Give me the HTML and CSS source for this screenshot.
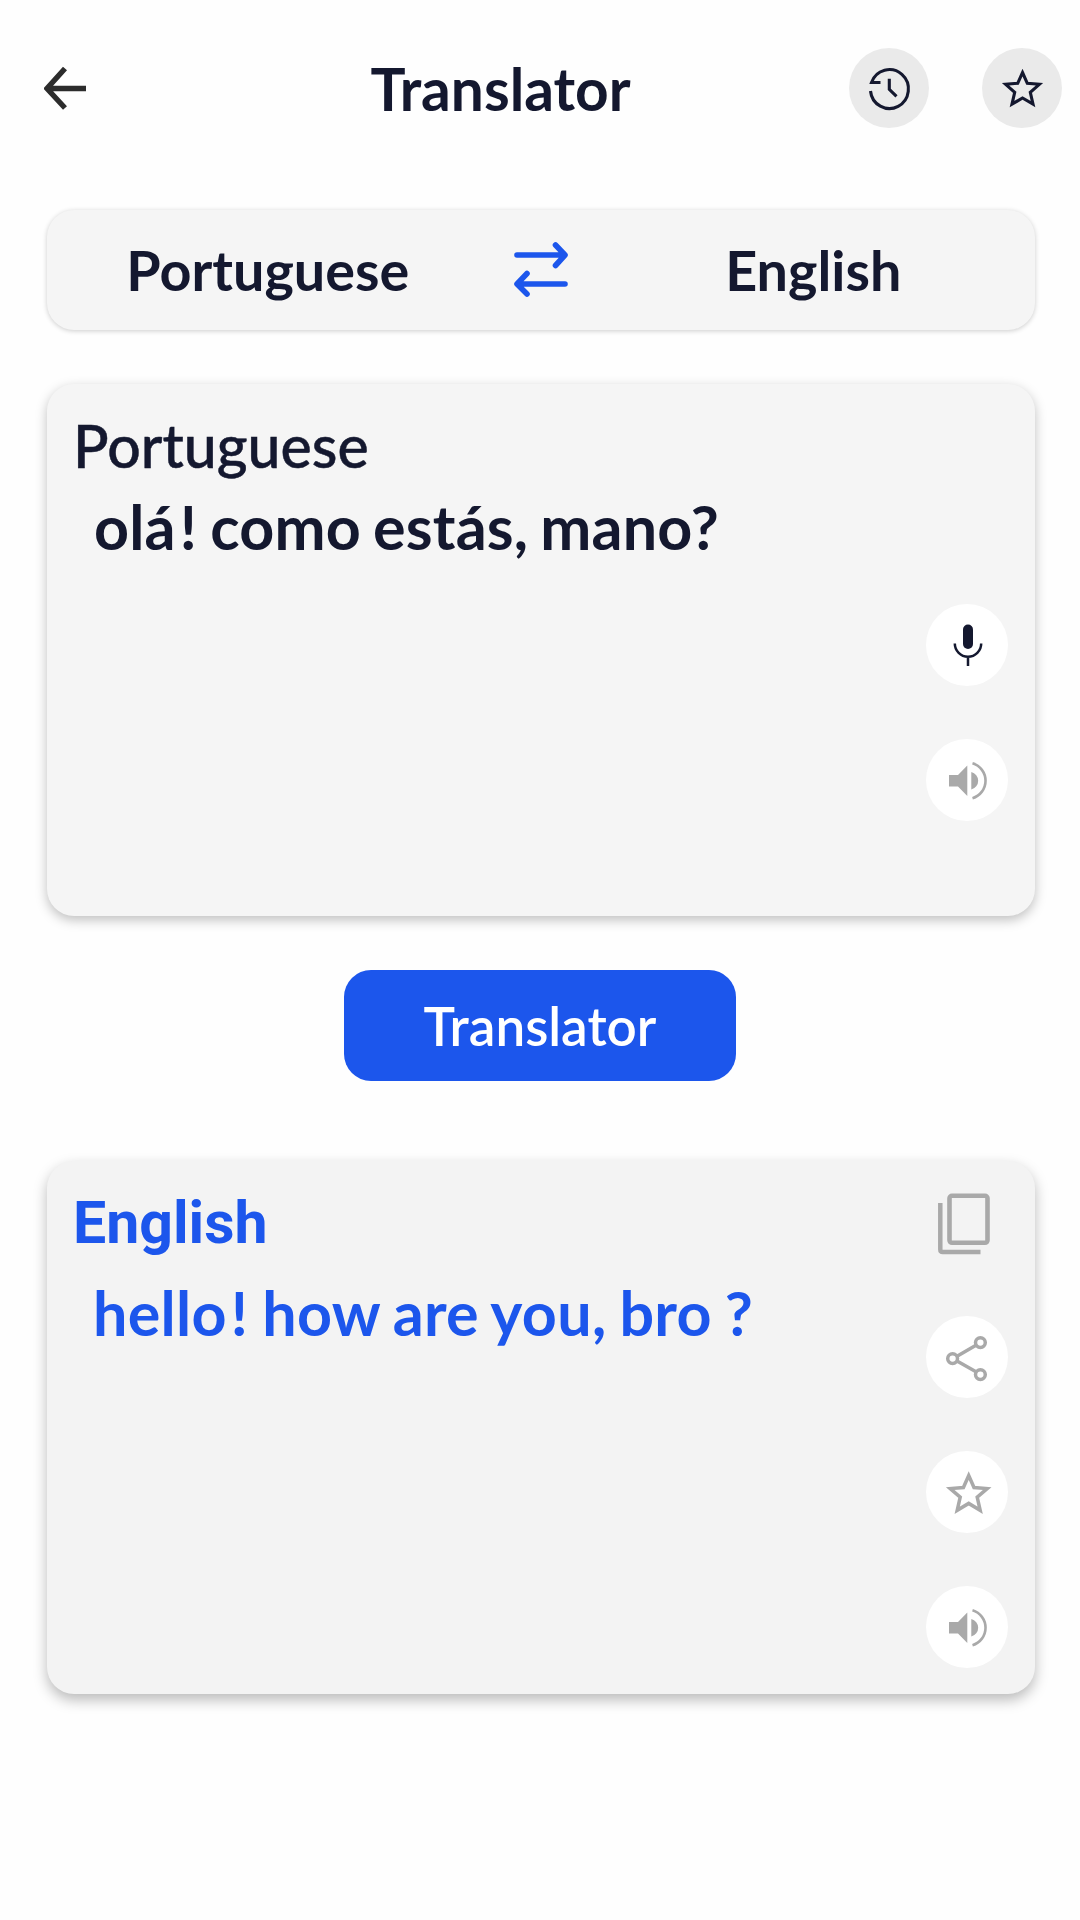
FILE: index.html
```html
<!DOCTYPE html>
<html lang="en">
<head>
  <meta charset="UTF-8" />
  <meta name="viewport" content="width=device-width, initial-scale=1.0"/>
  <title>Translator</title>
  <link rel="stylesheet" href="styles.css">
</head>
<body>
  <div class="header">
    <button class="back-button" aria-label="Back">
      <svg width="42" height="44" viewBox="0 0 42 44"><path d="M42 22.500H6M21 2.500L3 22.500L21 42" fill="none" stroke="#2c2c2c" stroke-width="5.400"/></svg>
    </button>
    <h1 class="title">Translator</h1>
    <div class="header-actions">
      <button class="round-button gray" aria-label="History">
        <svg viewBox="0 0 80 80"><path d="M31.500 34.500H22.500A19 19.500 0 1 1 21.500 43M40.300 30.800V41.300L47.500 48.300" fill="none" stroke="#14182f" stroke-width="3.100"/></svg>
      </button>
      <button class="round-button gray" aria-label="Favorites">
        <svg viewBox="0 0 80 80"><path d="M40.500 24.500L45.300 35.300L57.400 36.300L48.300 44.400L51 56.200L40.500 50L30 56.200L32.700 44.400L23.600 36.300L35.700 35.300Z" fill="none" stroke="#14182f" stroke-width="3.100"/></svg>
      </button>
    </div>
  </div>

  <div class="languages">
    <span class="language from">Portuguese</span>
    <button class="swap-button" aria-label="Swap languages">
      <svg width="54" height="56" viewBox="0 0 54 56"><path d="M3 13H50.500M41.500 3L51 13L41.500 23.500M51 42H3.500M13 31.500L3 42L13 52" fill="none" stroke="#1c56ec" stroke-width="5.600" stroke-linecap="round" stroke-linejoin="round"/></svg>
    </button>
    <span class="language to">English</span>
  </div>

  <div class="card source">
    <div class="card-text">
      <h2>Portuguese</h2>
      <p>olá<span class="mark">!</span> como estás, mano?</p>
    </div>
    <div class="card-actions">
      <button class="round-button" aria-label="Speak">
        <svg viewBox="0 0 82 82"><rect x="37" y="20.500" width="10" height="24.500" rx="5" fill="#14182f"/><path d="M28.800 39.500A13.200 13.200 0 0 0 55.200 39.500M42 52.500V62" fill="none" stroke="#14182f" stroke-width="2.500"/></svg>
      </button>
      <button class="round-button" aria-label="Listen">
        <svg viewBox="0 0 82 82"><path d="M23 36H32L41.300 26.500V57L32 47.500H23Z M45.300 33A9 9 0 0 1 45.300 50.500Z" fill="#a9a9a9"/><path d="M46.500 24.300A18.200 18.200 0 0 1 46.500 59.200" fill="none" stroke="#a9a9a9" stroke-width="2.600"/></svg>
      </button>
    </div>
  </div>

  <button class="translate-button">Translator</button>

  <div class="card result">
    <div class="card-text">
      <h2>English</h2>
      <p>hello<span class="mark">!</span> how are you, bro ?</p>
    </div>
    <div class="card-actions">
      <button class="copy-button" aria-label="Copy">
        <svg width="52" height="62" viewBox="0 0 52 62"><rect x="11.500" y="2.800" width="38" height="47" rx="2.500" fill="none" stroke="#a9a9a9" stroke-width="4.600"/><path d="M2.300 10V56.500Q2.300 59 4.800 59H42.500" fill="none" stroke="#a9a9a9" stroke-width="4.500"/></svg>
      </button>
      <button class="round-button" aria-label="Share">
        <svg viewBox="0 0 82 82"><g fill="none" stroke="#a9a9a9" stroke-width="3.500"><path d="M31 40.200L50 29.200M31 45L50 55.700"/><circle cx="26.600" cy="42.600" r="4.900"/><circle cx="54.400" cy="26.600" r="4.900"/><circle cx="54.400" cy="58.600" r="4.900"/></g></svg>
      </button>
      <button class="round-button" aria-label="Add to favorites">
        <svg viewBox="0 0 82 82"><path d="M42.700 24.500L48 36.500L61.200 37.600L51.200 46.200L54.200 59.300L42.700 52.400L31.200 59.300L34.200 46.200L24.200 37.600L37.400 36.500Z" fill="none" stroke="#a9a9a9" stroke-width="3.500"/></svg>
      </button>
      <button class="round-button" aria-label="Listen">
        <svg viewBox="0 0 82 82"><path d="M23 36H32L41.300 26.500V57L32 47.500H23Z M45.300 33A9 9 0 0 1 45.300 50.500Z" fill="#a9a9a9"/><path d="M46.500 24.300A18.200 18.200 0 0 1 46.500 59.200" fill="none" stroke="#a9a9a9" stroke-width="2.600"/></svg>
      </button>
    </div>
  </div>
</body>
</html>
```
FILE: styles.css
```css
* {
  box-sizing: border-box;
}
body {
  font-family: Lato, sans-serif;
  margin: 0;
  min-height: 1920px;
  display: flex;
  flex-direction: column;
  background-color: #fefefe;
  color: #14182f;
}
button {
  display: block;
  padding: 0;
  border: none;
  background: none;
  font-family: inherit;
  cursor: pointer;
}
svg {
  display: block;
}
h1, h2, p {
  margin: 0;
}
.header {
  display: flex;
  align-items: center;
  height: 80px;
  margin-top: 48px;
  padding: 0 18px 0 44px;
}
.back-button {
  width: 108px;
}
.title {
  flex: 1;
  text-align: center;
  font-size: 58.6px;
  font-weight: 700;
  line-height: 72px;
}
.header-actions {
  display: flex;
  gap: 53px;
}
.round-button {
  width: 82px;
  height: 82px;
  border-radius: 50%;
  background-color: #fff;
}
.round-button.gray {
  width: 80px;
  height: 80px;
  background-color: #eaeaea;
}
.languages {
  display: flex;
  align-items: center;
  height: 120px;
  margin: 82px 45.5px 0 46.5px;
  border-radius: 27px;
  background-color: #f5f5f5;
  box-shadow: 0 1px 5px rgba(0, 0, 0, 0.2);
}
.language {
  flex: 1;
  text-align: center;
  font-size: 55.7px;
  font-weight: 700;
  line-height: 68px;
}
.language.from {
  padding-right: 25px;
}
.language.to {
  padding-left: 24px;
}
.card {
  display: flex;
  justify-content: space-between;
  height: 532px;
  margin: 54px 45.5px 0 46.5px;
  border-radius: 27px;
  background-color: #f5f5f5;
  box-shadow: 0 4px 12px rgba(0, 0, 0, 0.25);
}
.card-text {
  padding: 26px 0 0 26.5px;
}
.card-text h2 {
  font-size: 59px;
  font-weight: 500;
  line-height: 72px;
  -webkit-text-stroke: 0.5px currentColor;
}
.card-text p {
  padding: 8px 0 0 21px;
  font-size: 61px;
  font-weight: 700;
  line-height: 74px;
  letter-spacing: 0.2px;
  word-spacing: -3px;
}
.mark {
  margin: 0 1px 0 4px;
}
.card-actions {
  display: flex;
  flex-direction: column;
  gap: 53px;
  padding: 220px 26.5px 0 0;
}
.translate-button {
  align-self: center;
  width: 392px;
  height: 111px;
  margin-top: 54px;
  padding-bottom: 1px;
  border-radius: 27px;
  background-color: #1c56ec;
  color: #fff;
  font-size: 53px;
  font-weight: 600;
}
.card.result {
  height: 533px;
  margin-top: 80px;
  background-color: #f3f3f3;
  box-shadow: 0 6px 14px rgba(0, 0, 0, 0.27);
}
.result .card-text {
  color: #1c56ec;
}
.result h2 {
  font-family: Roboto, sans-serif;
  font-size: 59px;
  font-weight: 700;
  -webkit-text-stroke: 0;
}
.result p {
  padding: 17px 0 0 20px;
  letter-spacing: 0.3px;
  word-spacing: -2.2px;
}
.result .card-actions {
  padding-top: 32px;
}
.copy-button {
  margin: 0 0 8px 12px;
}
```
